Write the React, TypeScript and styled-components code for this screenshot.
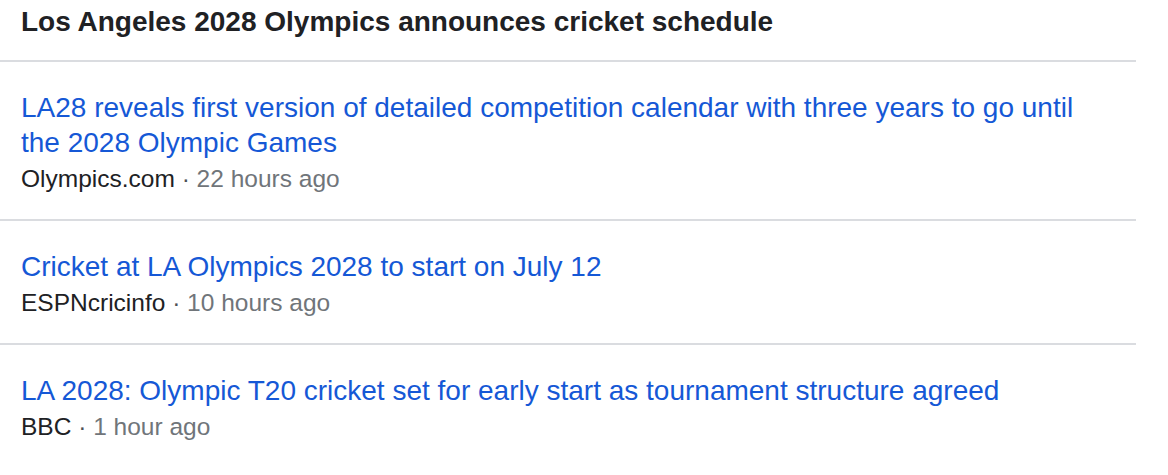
import React from "react";
import styled, { createGlobalStyle } from "styled-components";

const GlobalStyle = createGlobalStyle`
  html, body {
    margin: 0;
    padding: 0;
    background: #ffffff;
  }
  body {
    font-family: "Liberation Sans", Arial, sans-serif;
  }
`;

const Panel = styled.section`
  width: 1136px;
  display: flex;
  flex-direction: column;
  background: #ffffff;
`;

const Header = styled.h2`
  margin: 0;
  padding: 4px 21px 20px;
  font-size: 28px;
  line-height: 36px;
  font-weight: 700;
  color: #202124;
  border-bottom: 2px solid #dadce0;
`;

const Item = styled.article`
  display: flex;
  flex-direction: column;
  padding: 28px 21px 25px;
  & + & {
    border-top: 2px solid #dadce0;
  }
`;

const Title = styled.a`
  font-size: 28px;
  line-height: 35px;
  color: #1558d6;
  text-decoration: none;
`;

const Meta = styled.div`
  margin-top: 4px;
  font-size: 24.5px;
  line-height: 30px;
  color: #202124;
`;

const Dot = styled.span`
  color: #4d5156;
`;

const Time = styled.span`
  color: #70757a;
`;

const stories = [
  {
    title:
      "LA28 reveals first version of detailed competition calendar with three years to go until the 2028 Olympic Games",
    source: "Olympics.com",
    time: "22 hours ago",
  },
  {
    title: "Cricket at LA Olympics 2028 to start on July 12",
    source: "ESPNcricinfo",
    time: "10 hours ago",
  },
  {
    title:
      "LA 2028: Olympic T20 cricket set for early start as tournament structure agreed",
    source: "BBC",
    time: "1 hour ago",
  },
];

export default function App() {
  return (
    <>
      <GlobalStyle />
      <Panel>
        <Header>Los Angeles 2028 Olympics announces cricket schedule</Header>
        {stories.map((s) => (
          <Item key={s.title}>
            <Title href="#">{s.title}</Title>
            <Meta>
              {s.source}
              <Dot> · </Dot>
              <Time>{s.time}</Time>
            </Meta>
          </Item>
        ))}
      </Panel>
    </>
  );
}
